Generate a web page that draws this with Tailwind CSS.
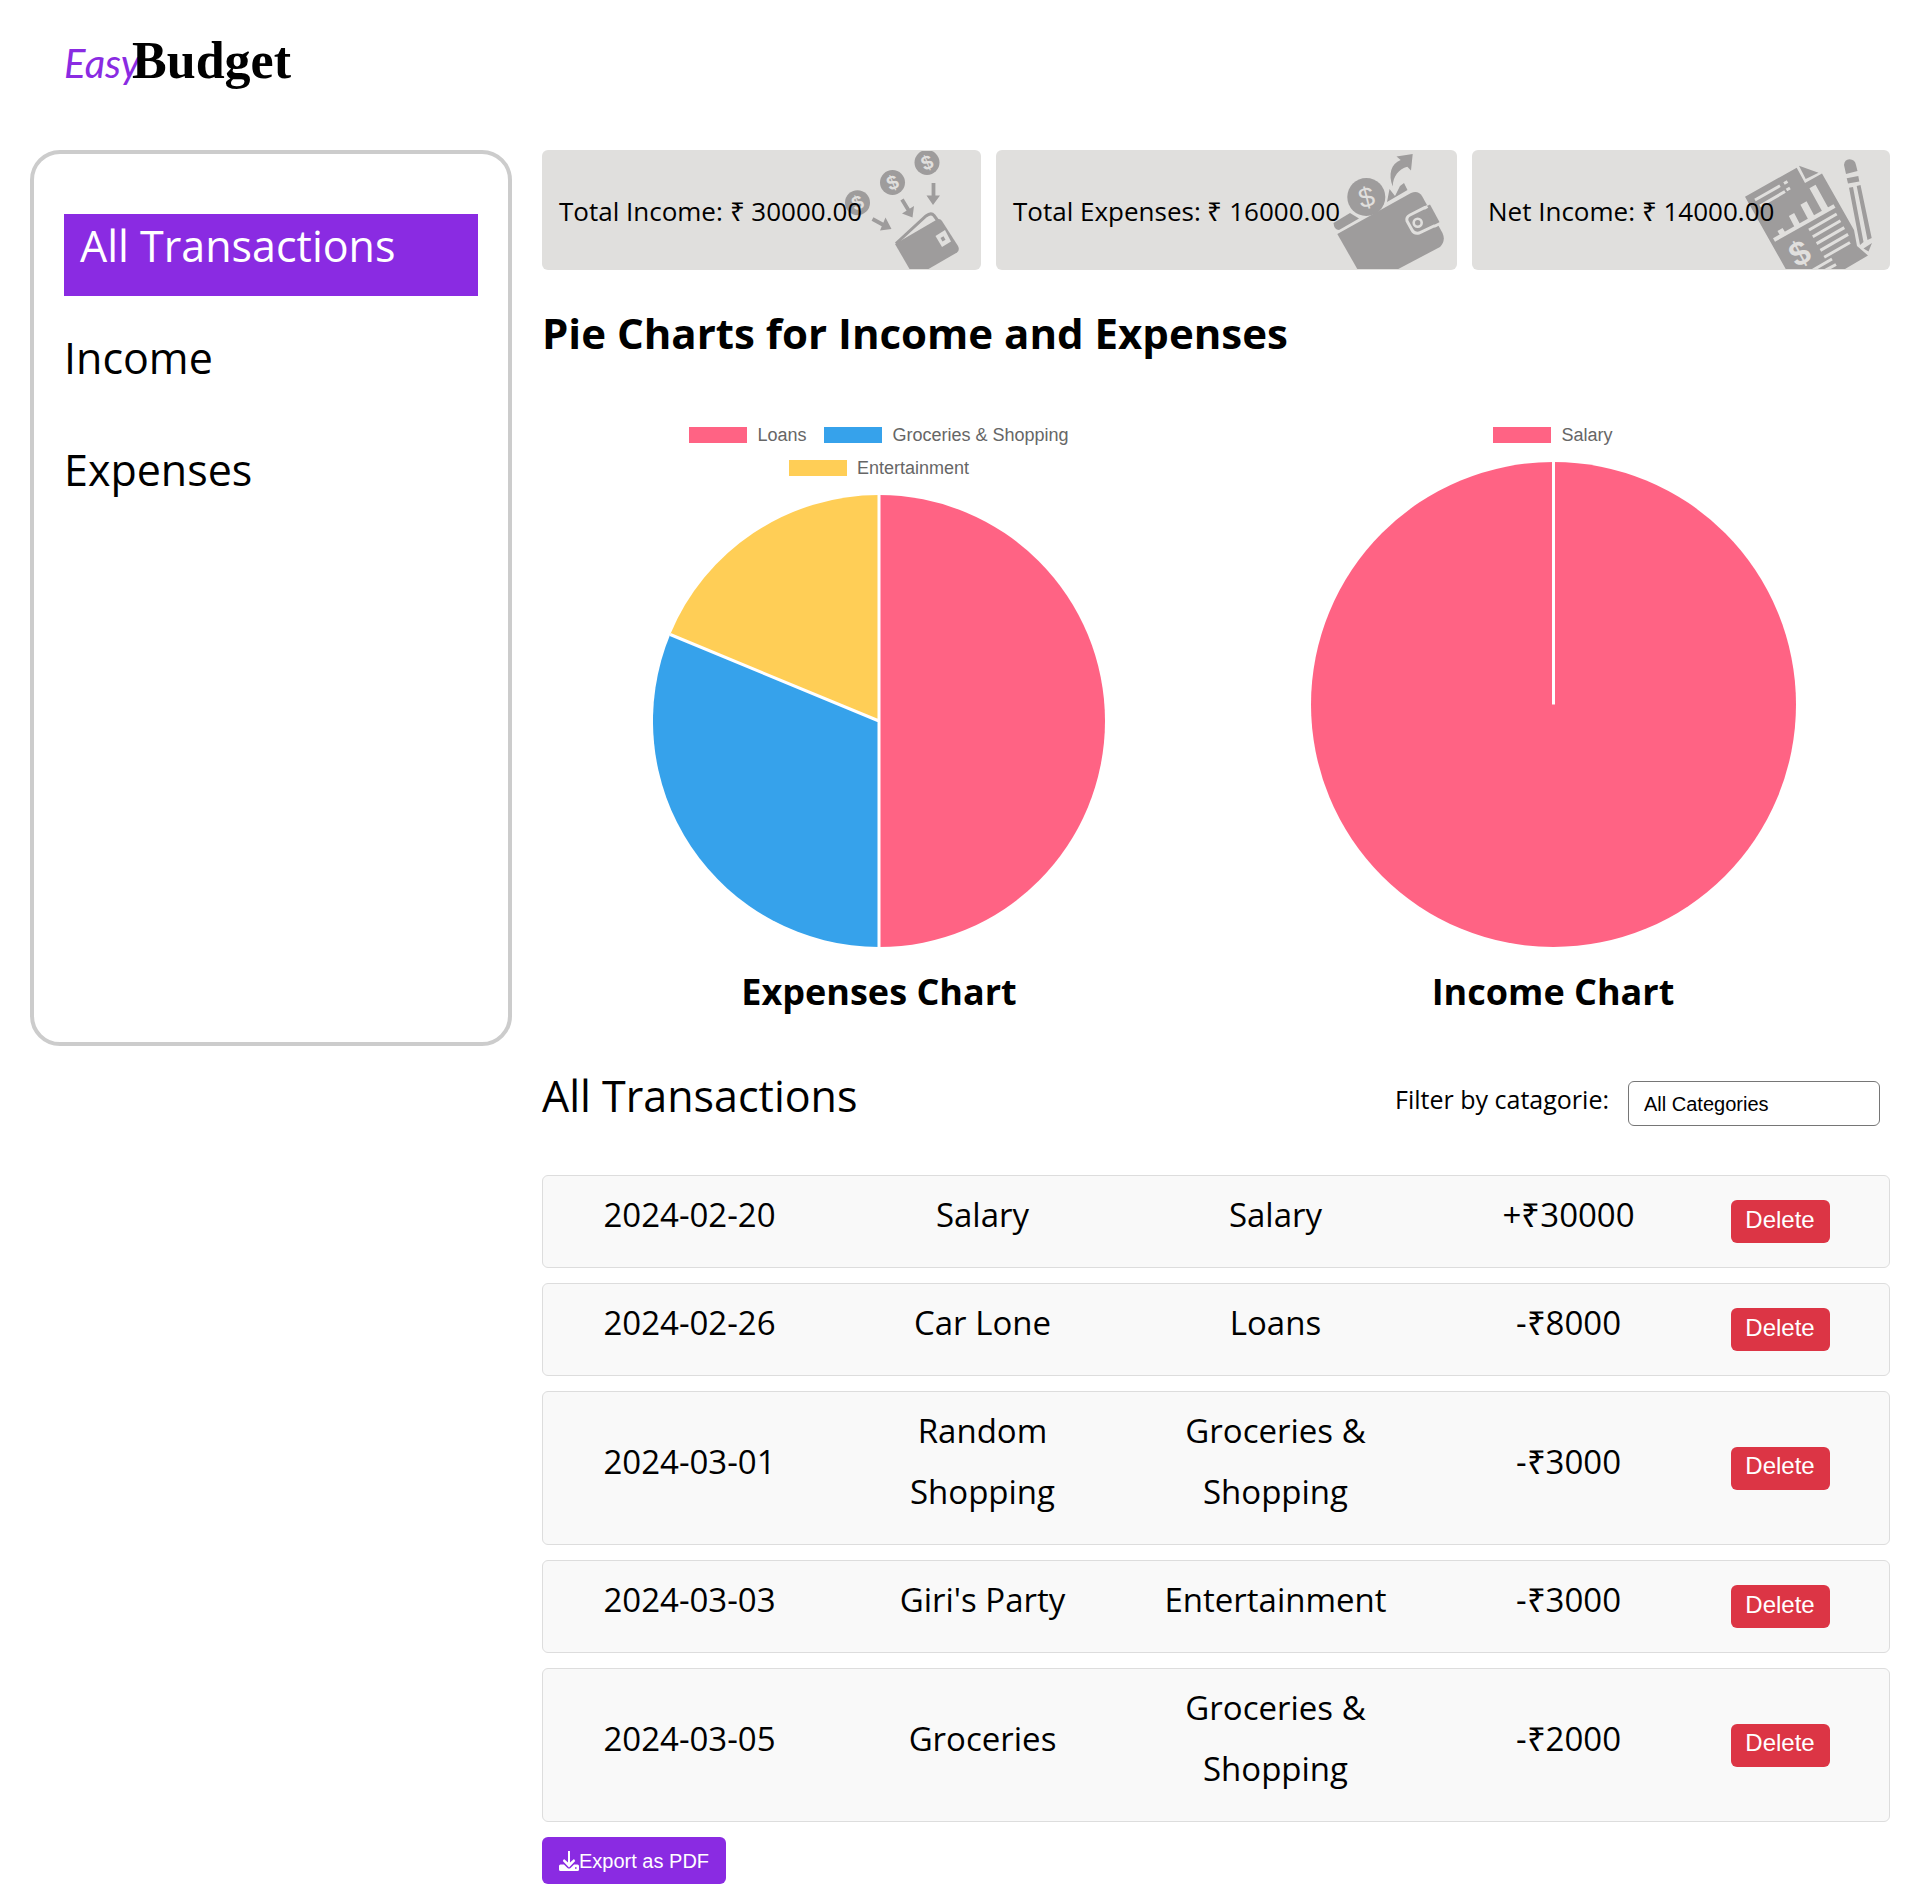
<!DOCTYPE html>
<html lang="en">
<head>
<meta charset="utf-8">
<meta name="viewport" content="width=device-width, initial-scale=1">
<title>EasyBudget</title>
<script src="https://cdn.jsdelivr.net/npm/@tailwindcss/browser@4"></script>
</head>
<body class="bg-white text-black font-['Open_Sans',sans-serif]">

<header class="h-[150px] pt-[31px] pl-16">
  <a href="#" class="inline-flex items-baseline leading-[60px]">
    <span class="font-['Lato',cursive] italic text-[40px] text-[#8a2be2]">Easy</span><span class="-ml-2 font-['Liberation_Serif',serif] font-bold text-[52px]">Budget</span>
  </a>
</header>

<div class="grid grid-cols-[241fr_674fr] items-start gap-[30px] px-[30px]">

  <nav class="h-[896px] rounded-[30px] border-4 border-[#ccc] px-[30px] pt-[60px]">
    <ul class="flex flex-col gap-[30px] text-[43px] leading-[64px]">
      <li><a href="#" class="block bg-[#8a2be2] px-4 pb-[18px] text-white">All Transactions</a></li>
      <li><a href="#" class="block pb-[18px]">Income</a></li>
      <li><a href="#" class="block pb-[18px]">Expenses</a></li>
    </ul>
  </nav>

  <main>
    <section class="grid grid-cols-[439fr_461fr_418fr] gap-[15px] text-[26px]">
      <div class="relative flex h-[120px] items-center overflow-hidden rounded-md bg-[#e0dfdd] pt-[3px] pl-[17px]">
        <svg class="absolute right-0 top-0" width="141" height="120" viewBox="0 0 141 120" fill="#9e9c9c" aria-hidden="true">
          <defs><clipPath id="c1"><rect y="1" width="160" height="118"/></clipPath></defs>
          <g clip-path="url(#c1)">
            <circle cx="87" cy="12.5" r="12.5"/><circle cx="52.5" cy="32.5" r="12.5"/><circle cx="17.5" cy="52.7" r="12.5"/>
            <g fill="#e0dfdd" font-family="Liberation Sans, sans-serif" font-weight="700" font-size="20" text-anchor="middle">
              <text transform="translate(87 12.5) rotate(-22)" y="7">$</text>
              <text transform="translate(52.5 32.5) rotate(-22)" y="7">$</text>
              <text transform="translate(17.5 52.7) rotate(-22)" y="7">$</text>
            </g>
            <g stroke="#9e9c9c" stroke-width="3.8" fill="none"><path d="M93.5 33V47M62 49.5 69 61M32.5 69 43.5 75"/></g>
            <path d="M86.5 45.5H100L93 55ZM62 63.5 74 56 72.5 67.5ZM45.5 67.5 51.5 79 40 80.5Z"/>
            <path d="M56 93.5 86 66Q91 62 94 65.500L98 71" fill="none" stroke="#9e9c9c" stroke-width="3"/>
            <path d="M55 94 97 69.500Q100 68 102 71L118 96Q120 100 117 102.500L88.500 119H69.500Z"/>
            <path d="M95.500 86 105 80 111 91.500 102 97Z" fill="#e0dfdd"/>
            <path d="m100.500 88 3-1.700 2 3.500-3 1.800z"/>
          </g>
        </svg>
        <p class="relative whitespace-nowrap">Total Income: ₹ 30000.00</p>
      </div>

      <div class="relative flex h-[120px] items-center overflow-hidden rounded-md bg-[#e0dfdd] pt-[3px] pl-[17px]">
        <svg class="absolute right-0 top-0" width="145" height="120" viewBox="0 0 145 120" fill="#9e9c9c" aria-hidden="true">
          <g clip-path="url(#c1)">
            <circle cx="54.300" cy="47" r="19"/>
            <text transform="translate(54.300 47) rotate(-14)" y="10" fill="#e0dfdd" font-family="Liberation Sans, sans-serif" font-size="28" text-anchor="middle">$</text>
            <path d="M80.700 36.500C76 24 79 14 88.700 10L84.500 6.500 100.700 4 99 20.500 95.300 16.700C87 19 81 26 80.700 36.500Z"/>
            <path d="M75 52 77.500 39 83 46 88 36 92 33 95.500 40Z"/>
            <path d="M25 86 110 38 116 50 50 119H40Z" fill="#e0dfdd"/>
            <path d="M21.500 73 38 63 47 68.500 27 80Q22 80 21.500 73Z"/>
            <path d="M25.300 84 99 43Q106 40 110 46L130.500 83Q134 91 128 97L86.300 119H45.300Z"/>
            <path d="M98 65 113 57.500Q117 56 119 59L126 69Q127 73 124 75L107 83Q102 84 100 80L95 71Q94 67 98 65Z" stroke="#e0dfdd" stroke-width="3"/>
            <path d="M113 57 118 54.500 128 73 123 76Z" fill="#9e9c9c"/>
            <path d="M112 58.500 115.500 56.500M122 76.500 129 73" stroke="#e0dfdd" stroke-width="3"/>
            <circle cx="105.700" cy="72.700" r="4" fill="none" stroke="#e0dfdd" stroke-width="2.600"/>
          </g>
        </svg>
        <p class="relative whitespace-nowrap">Total Expenses: ₹ 16000.00</p>
      </div>

      <div class="relative flex h-[120px] items-center overflow-hidden rounded-md bg-[#e0dfdd] pt-[3px] pl-4">
        <svg class="absolute right-0 top-0" width="155" height="120" viewBox="0 0 155 120" fill="#9e9c9c" aria-hidden="true">
          <g clip-path="url(#c1)">
            <path d="M10 46.700 61.700 17.700 70 33 87 23.500 119 80 122 96 133 105.500 110 119H50.700Z"/>
            <path d="M64 15.700 83.500 22.700 70.700 29Z"/>
            <g stroke="#e0dfdd" fill="none">
              <path stroke-width="3" d="M20 50 45 35.700M25 56 50 41.500M49 33.500 52.500 31.500M51.500 40 55 38"/>
              <path stroke-width="4" d="M39 90 99.500 56"/>
              <path stroke-width="6" d="M45 79.500 49 86M56.500 64.500 63 77"/>
              <path stroke-width="7" d="M68.500 53 77 69M77.500 36.500 91 61"/>
              <path stroke-width="3" d="M74 80 101.700 64M77.800 86.800 105.500 70.800M81.600 93.600 109.300 77.600M85.400 100.400 113.100 84.400M89.200 107.200 115 92.500M78 120 97 109M88 121.500 101 114.500"/>
            </g>
            <text transform="translate(64.500 103) rotate(-28)" y="12" fill="#e0dfdd" font-family="Liberation Sans, sans-serif" font-weight="700" font-size="34" text-anchor="middle">$</text>
            <path d="M109 15Q109.500 9.500 114.500 9.300 120 9.500 121 15L122.500 21 111 24ZM111.700 28.300 123.300 26 124.300 31.500 113 33.500ZM114 37.700 118 37 128.500 92 125 95ZM121.700 36 125.500 35 136.700 88 132.500 90ZM128.500 98.500 137 93 133.500 101.500Z"/>
          </g>
        </svg>
        <p class="relative whitespace-nowrap">Net Income: ₹ 14000.00</p>
      </div>
    </section>

    <h2 class="mt-[31px] text-[42px] leading-[63px] font-bold">Pie Charts for Income and Expenses</h2>

    <section class="mt-[59px] grid grid-cols-2 items-start">
      <figure class="flex flex-col items-center">
        <ul class="flex w-[420px] flex-wrap justify-center gap-x-[18px] gap-y-[9px] font-['Liberation_Sans',sans-serif] text-[18px] leading-6 text-[#666]">
          <li class="flex items-center gap-[10px]"><span class="h-4 w-[58px] bg-[#ff6384]"></span>Loans</li>
          <li class="flex items-center gap-[10px]"><span class="h-4 w-[58px] bg-[#36a2eb]"></span>Groceries &amp; Shopping</li>
          <li class="flex items-center gap-[10px]"><span class="h-4 w-[58px] bg-[#ffce56]"></span>Entertainment</li>
        </ul>
        <svg class="mt-[15px] size-[452px]" viewBox="-226 -226 452 452" role="img" aria-label="Expenses by category">
          <path fill="#ff6384" d="M0 0V-226A226 226 0 0 1 0 226Z"/>
          <path fill="#36a2eb" d="M0 0V226A226 226 0 0 1-208.800-86.500Z"/>
          <path fill="#ffce56" d="M0 0-208.800-86.500A226 226 0 0 1 0-226Z"/>
          <path stroke="#fff" stroke-width="3" d="M0-226V226M0 0-208.800-86.500"/>
        </svg>
        <figcaption class="mt-[18px] text-4xl leading-[54px] font-bold">Expenses Chart</figcaption>
      </figure>
      <figure class="flex flex-col items-center">
        <ul class="flex justify-center font-['Liberation_Sans',sans-serif] text-[18px] leading-6 text-[#666]">
          <li class="flex items-center gap-[10px]"><span class="h-4 w-[58px] bg-[#ff6384]"></span>Salary</li>
        </ul>
        <svg class="mt-[15px] size-[485px]" viewBox="-243 -243 486 486" role="img" aria-label="Income by category">
          <circle r="243" fill="#ff6384"/>
          <path stroke="#fff" stroke-width="3" d="M0-243V0"/>
        </svg>
        <figcaption class="mt-[18px] text-4xl leading-[54px] font-bold">Income Chart</figcaption>
      </figure>
    </section>

    <section class="mt-[45px]">
      <div class="flex items-start justify-between pr-[10px]">
        <h2 class="text-[43px] leading-[63px]">All Transactions</h2>
        <div class="mt-[17px] flex gap-[19px]">
          <label for="category" class="text-[25px] leading-9">Filter by catagorie:</label>
          <select id="category" class="h-[45px] w-[252px] appearance-none rounded-md border border-[#767676] bg-white px-[15px] font-['Liberation_Sans',sans-serif] text-[20px]">
            <option>All Categories</option>
            <option>Salary</option>
            <option>Loans</option>
            <option>Groceries &amp; Shopping</option>
            <option>Entertainment</option>
          </select>
        </div>
      </div>

      <table class="mt-12 block text-center text-[33px] leading-[61px]">
        <tbody class="flex flex-col gap-[15px]">
          <tr class="grid grid-cols-[293fr_293fr_293fr_293fr_130fr] items-center rounded-md border border-[#ddd] bg-[#f9f9f9] pr-11">
            <td class="px-8 pt-2 pb-[22px]">2024-02-20</td><td class="px-8 pt-2 pb-[22px]">Salary</td><td class="px-8 pt-2 pb-[22px]">Salary</td><td class="pt-2 pb-[22px]">+₹30000</td>
            <td class="flex justify-center"><button class="h-[43px] w-[99px] rounded-md bg-[#dc3545] pb-1 font-['Liberation_Sans',sans-serif] text-2xl text-white">Delete</button></td>
          </tr>
          <tr class="grid grid-cols-[293fr_293fr_293fr_293fr_130fr] items-center rounded-md border border-[#ddd] bg-[#f9f9f9] pr-11">
            <td class="px-8 pt-2 pb-[22px]">2024-02-26</td><td class="px-8 pt-2 pb-[22px]">Car Lone</td><td class="px-8 pt-2 pb-[22px]">Loans</td><td class="pt-2 pb-[22px]">-₹8000</td>
            <td class="flex justify-center"><button class="h-[43px] w-[99px] rounded-md bg-[#dc3545] pb-1 font-['Liberation_Sans',sans-serif] text-2xl text-white">Delete</button></td>
          </tr>
          <tr class="grid grid-cols-[293fr_293fr_293fr_293fr_130fr] items-center rounded-md border border-[#ddd] bg-[#f9f9f9] pr-11">
            <td class="px-8 pt-2 pb-[22px]">2024-03-01</td><td class="px-8 pt-2 pb-[22px]">Random Shopping</td><td class="px-8 pt-2 pb-[22px]">Groceries &amp; Shopping</td><td class="pt-2 pb-[22px]">-₹3000</td>
            <td class="flex justify-center"><button class="h-[43px] w-[99px] rounded-md bg-[#dc3545] pb-1 font-['Liberation_Sans',sans-serif] text-2xl text-white">Delete</button></td>
          </tr>
          <tr class="grid grid-cols-[293fr_293fr_293fr_293fr_130fr] items-center rounded-md border border-[#ddd] bg-[#f9f9f9] pr-11">
            <td class="px-8 pt-2 pb-[22px]">2024-03-03</td><td class="px-8 pt-2 pb-[22px]">Giri's Party</td><td class="px-8 pt-2 pb-[22px]">Entertainment</td><td class="pt-2 pb-[22px]">-₹3000</td>
            <td class="flex justify-center"><button class="h-[43px] w-[99px] rounded-md bg-[#dc3545] pb-1 font-['Liberation_Sans',sans-serif] text-2xl text-white">Delete</button></td>
          </tr>
          <tr class="grid grid-cols-[293fr_293fr_293fr_293fr_130fr] items-center rounded-md border border-[#ddd] bg-[#f9f9f9] pr-11">
            <td class="px-8 pt-2 pb-[22px]">2024-03-05</td><td class="px-8 pt-2 pb-[22px]">Groceries</td><td class="px-8 pt-2 pb-[22px]">Groceries &amp; Shopping</td><td class="pt-2 pb-[22px]">-₹2000</td>
            <td class="flex justify-center"><button class="h-[43px] w-[99px] rounded-md bg-[#dc3545] pb-1 font-['Liberation_Sans',sans-serif] text-2xl text-white">Delete</button></td>
          </tr>
        </tbody>
      </table>

      <button class="mt-[15px] flex h-[47px] items-center rounded-md bg-[#8a2be2] px-[17px] font-['Liberation_Sans',sans-serif] text-[20px] text-white">
        <svg width="20" height="20" viewBox="0 0 20 20" fill="#fff" aria-hidden="true">
          <path d="M9 0h2v11.500L15 8l1.200 2L10 16.500 3.800 10 5 8l4 3.500Z"/>
          <path d="M1.500 13.500H5L8.500 17Q10 18 11.500 17L15 13.500H18.500Q20 13.500 20 15V18.500Q20 20 18.500 20H1.500Q0 20 0 18.500V15Q0 13.500 1.500 13.500ZM16 16.200V17.800H17.600V16.200Z" fill-rule="evenodd"/>
        </svg>Export as PDF
      </button>
    </section>
  </main>
</div>
</body>
</html>
